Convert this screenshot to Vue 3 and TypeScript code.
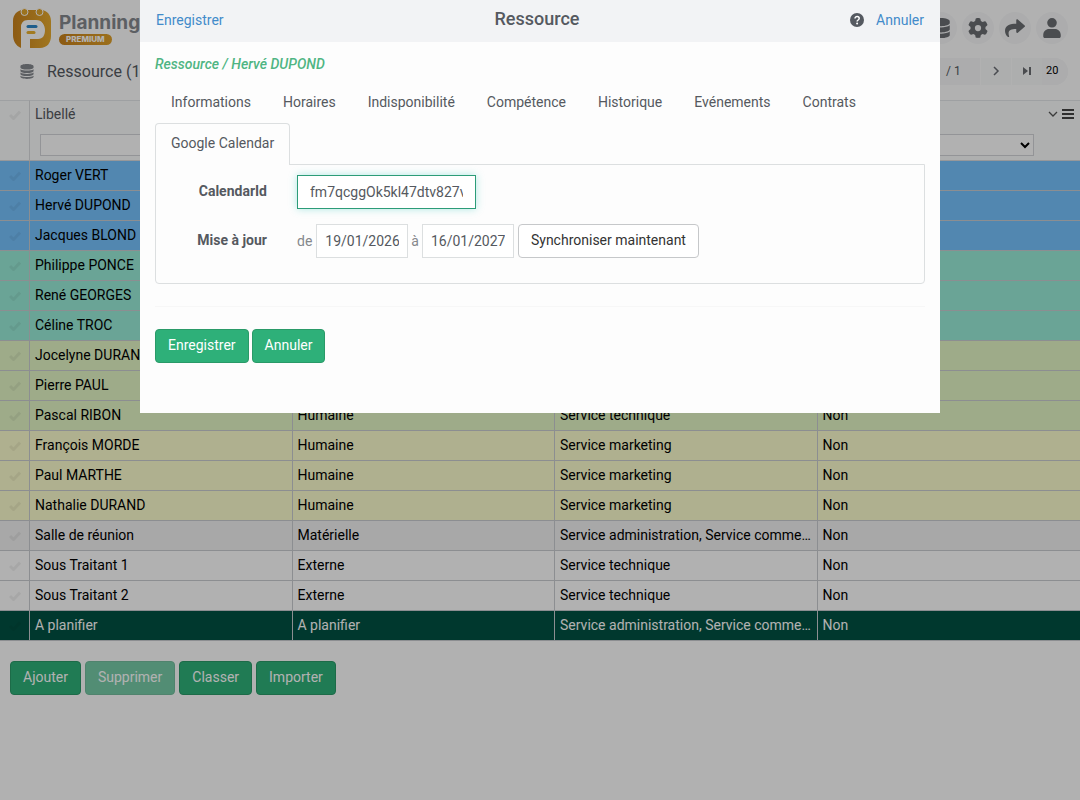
<script setup lang="ts">
import { ref } from 'vue'

interface Row {
  name: string
  tone: string
  type?: string
  service?: string
  ext?: string
}

const rows: Row[] = [
  { name: 'Roger VERT', tone: 'blue' },
  { name: 'Hervé DUPOND', tone: 'blue' },
  { name: 'Jacques BLOND', tone: 'blue' },
  { name: 'Philippe PONCE', tone: 'teal' },
  { name: 'René GEORGES', tone: 'teal' },
  { name: 'Céline TROC', tone: 'teal' },
  { name: 'Jocelyne DURAND', tone: 'green' },
  { name: 'Pierre PAUL', tone: 'green' },
  { name: 'Pascal RIBON', tone: 'green', type: 'Humaine', service: 'Service technique', ext: 'Non' },
  { name: 'François MORDE', tone: 'yellow', type: 'Humaine', service: 'Service marketing', ext: 'Non' },
  { name: 'Paul MARTHE', tone: 'yellow', type: 'Humaine', service: 'Service marketing', ext: 'Non' },
  { name: 'Nathalie DURAND', tone: 'yellow', type: 'Humaine', service: 'Service marketing', ext: 'Non' },
  { name: 'Salle de réunion', tone: 'grey', type: 'Matérielle', service: 'Service administration, Service commercial', ext: 'Non' },
  { name: 'Sous Traitant 1', tone: 'white', type: 'Externe', service: 'Service technique', ext: 'Non' },
  { name: 'Sous Traitant 2', tone: 'white', type: 'Externe', service: 'Service technique', ext: 'Non' },
  { name: 'A planifier', tone: 'dark', type: 'A planifier', service: 'Service administration, Service commercial', ext: 'Non' },
]

const tabs = ['Informations', 'Horaires', 'Indisponibilité', 'Compétence', 'Historique', 'Evénements', 'Contrats', 'Google Calendar']
const activeTab = ref('Google Calendar')
const calendarId = ref('fm7qcggOk5kl47dtv827v')
const dateFrom = ref('19/01/2026')
const dateTo = ref('16/01/2027')
const pageSize = ref('20')
const nameFilter = ref('')
</script>

<template>
  <div class="app">
    <div class="page">
      <header class="top">
        <a class="brand" href="#">
          <svg class="logo" viewBox="0 0 40 42" aria-hidden="true">
            <defs>
              <linearGradient id="gold" x1="0" y1="0" x2="1" y2="0">
                <stop offset="0" stop-color="#c9821c" />
                <stop offset="1" stop-color="#e6aa2e" />
              </linearGradient>
            </defs>
            <path d="M11 3h18c6 0 10 5 10 11v15c0 7-4 12-11 12H18V32h8c5 0 7-4 7-9s-3-9-8-9H15c-4 0-6 3-6 7v20C4 39 1 34 1 28V14C1 8 5 3 11 3z" fill="url(#gold)" />
            <path d="M9 42V21c0-5 2-8 7-8h8c6 0 8 4 8 9s-2 9-8 9h-6v11z" fill="#fff" />
            <circle cx="12.500" cy="5" r="3.500" fill="#e0a52c" stroke="#fff" stroke-width="1" />
            <circle cx="27.500" cy="5" r="3.500" fill="#e0a52c" stroke="#fff" stroke-width="1" />
            <path d="M16 19.500h8" stroke="#2b86c8" stroke-width="3" stroke-linecap="round" />
            <path d="M16 25.500h6" stroke="#e8b030" stroke-width="3" stroke-linecap="round" />
          </svg>
          <span class="words">
            <span class="word">Planning</span>
            <span class="badge">PREMIUM</span>
          </span>
        </a>
        <nav class="tools" aria-label="Outils">
          <button class="round" type="button" aria-label="Données">
            <svg viewBox="0 0 448 512" class="i20"><path d="M448 80v48c0 44-100 80-224 80S0 172 0 128V80C0 36 100 0 224 0s224 36 224 80zM0 186c48 38 130 54 224 54s176-16 224-54v102c0 44-100 80-224 80S0 332 0 288zm0 160c48 38 130 54 224 54s176-16 224-54v86c0 44-100 80-224 80S0 476 0 432z" /></svg>
          </button>
          <button class="round" type="button" aria-label="Paramètres">
            <svg viewBox="0 0 512 512" class="i20"><path d="M495.900 166.600c3.200 8.700.5 18.400-6.400 24.600l-43.300 39.400c1.100 8.300 1.700 16.800 1.700 25.400s-.6 17.100-1.700 25.400l43.300 39.400c6.900 6.200 9.600 15.900 6.400 24.600-4.400 11.900-9.700 23.300-15.800 34.300l-4.700 8.100c-6.600 11-14 21.400-22.100 31.200-5.900 7.200-15.700 9.600-24.500 6.800l-55.700-17.700c-13.400 10.300-28.200 18.900-44 25.400l-12.500 57.100c-2 9.100-9 16.300-18.200 17.800-13.800 2.300-28 3.500-42.500 3.500s-28.700-1.200-42.500-3.500c-9.200-1.500-16.200-8.700-18.200-17.800l-12.500-57.100c-15.800-6.500-30.600-15.100-44-25.400l-55.600 17.800c-8.800 2.800-18.600.3-24.500-6.800-8.100-9.800-15.500-20.200-22.100-31.200l-4.700-8.100c-6.100-11-11.400-22.400-15.800-34.300-3.200-8.700-.5-18.400 6.400-24.600l43.300-39.400C64.600 273.100 64 264.600 64 256s.6-17.100 1.700-25.400l-43.300-39.400c-6.900-6.200-9.600-15.900-6.400-24.600 4.400-11.900 9.700-23.300 15.800-34.300l4.700-8.100c6.600-11 14-21.400 22.100-31.200 5.900-7.200 15.700-9.600 24.500-6.800l55.700 17.700c13.400-10.300 28.200-18.900 44-25.400l12.500-57.100c2-9.100 9-16.300 18.200-17.800C227.300 1.200 241.500 0 256 0s28.700 1.200 42.500 3.500c9.200 1.500 16.200 8.700 18.200 17.800l12.500 57.100c15.800 6.500 30.600 15.100 44 25.400l55.700-17.700c8.800-2.800 18.600-.3 24.500 6.800 8.100 9.800 15.500 20.200 22.100 31.200l4.700 8.100c6.100 11 11.400 22.400 15.700 34.400zM256 336a80 80 0 1 0 0-160 80 80 0 1 0 0 160z" /></svg>
          </button>
          <button class="round" type="button" aria-label="Partager">
            <svg viewBox="0 0 512 512" class="i20"><path d="M503.700 226.200l-176 152C312.300 391.500 288 380.700 288 360v-80C127.400 282 60 321 106 467c5 16-14 29-28 19C34 454 0 393 0 332 0 180 127 148 288 146V56c0-20.700 24.300-31.500 39.700-18.200l176 152c11 9.600 11 26.800 0 36.400z" /></svg>
          </button>
          <button class="round" type="button" aria-label="Compte">
            <svg viewBox="0 0 448 512" class="i20"><path d="M224 246a123 123 0 1 0 0-246 123 123 0 1 0 0 246zM150 280h148c83 0 150 67 150 150v42c0 22-18 40-40 40H40c-22 0-40-18-40-40v-42c0-83 67-150 150-150z" /></svg>
          </button>
        </nav>
      </header>

      <div class="subbar">
        <svg viewBox="0 0 448 512" class="i14"><path d="M448 73v45c0 40-100 73-224 73S0 158 0 118V73C0 33 100 0 224 0s224 33 224 73zM0 176c48 33 136 49 224 49s176-16 224-49v60c0 40-100 73-224 73S0 276 0 236zm0 118c48 33 136 49 224 49s176-16 224-49v46c0 40-100 73-224 73S0 380 0 340zm0 104c48 33 136 49 224 49s176-16 224-49v41c0 40-100 73-224 73S0 479 0 439z" /></svg>
        <h1>Ressource (16)</h1>
        <div class="pager">
          <span class="count">/ 1</span>
          <button type="button" aria-label="Page suivante"><svg viewBox="0 0 10 10" class="i10"><path d="M3 1l4 4-4 4" fill="none" stroke="#6b6e75" stroke-width="1.500" /></svg></button>
          <button type="button" aria-label="Dernière page"><svg viewBox="0 0 10 10" class="i10"><path d="M1 1l5 4-5 4zM7 1h2v8H7z" /></svg></button>
          <input v-model="pageSize" aria-label="Lignes par page" />
        </div>
      </div>

      <table>
        <colgroup><col class="c-check" /><col /><col /><col /><col /></colgroup>
        <thead>
          <tr>
            <th class="tick"><svg viewBox="0 0 12 10"><path d="M1 5l3.500 3.500L11 1.500" /></svg></th>
            <th>
              <div class="label">Libellé</div>
              <input v-model="nameFilter" class="filter" aria-label="Filtrer par libellé" />
            </th>
            <th></th>
            <th></th>
            <th>
              <div class="label end">
                <svg viewBox="0 0 10 10" class="i10"><path d="M1 3l4 4 4-4" fill="none" stroke="#555" stroke-width="1.300" /></svg>
                <svg viewBox="0 0 12 10" class="menu"><path d="M0 0h12v2H0zM0 4h12v2H0zM0 8h12v2H0z" /></svg>
              </div>
              <select class="filter" aria-label="Filtrer"><option></option></select>
            </th>
          </tr>
        </thead>
        <tbody>
          <tr v-for="row in rows" :key="row.name" :class="row.tone">
            <td class="tick"><svg viewBox="0 0 12 10"><path d="M1 5l3.500 3.500L11 1.500" /></svg></td>
            <td>{{ row.name }}</td>
            <td>{{ row.type }}</td>
            <td>{{ row.service }}</td>
            <td>{{ row.ext }}</td>
          </tr>
        </tbody>
      </table>

      <div class="actions">
        <button class="btn" type="button">Ajouter</button>
        <button class="btn" type="button" disabled>Supprimer</button>
        <button class="btn" type="button">Classer</button>
        <button class="btn" type="button">Importer</button>
      </div>
    </div>

    <div class="overlay">
      <section class="modal" role="dialog" aria-labelledby="dialog-title">
        <header class="modal-head">
          <a href="#">Enregistrer</a>
          <h2 id="dialog-title">Ressource</h2>
          <div class="head-end">
            <svg viewBox="0 0 14 14" class="help" aria-hidden="true"><circle cx="7" cy="7" r="7" fill="#555960" /><path d="M5 5.500c0-2.700 4.200-2.600 4.200 0C9.200 7 7.100 7 7.100 8.500" fill="none" stroke="#fff" stroke-width="1.500" /><circle cx="7.100" cy="10.500" r="1" fill="#fff" /></svg>
            <a href="#">Annuler</a>
          </div>
        </header>
        <div class="modal-body">
          <p class="crumb">Ressource / Hervé DUPOND</p>
          <div class="tabs" role="tablist">
            <button v-for="tab in tabs" :key="tab" type="button" role="tab" :aria-selected="tab === activeTab" :class="{ active: tab === activeTab }" @click="activeTab = tab">{{ tab }}</button>
          </div>
          <div class="panel" role="tabpanel">
            <div class="line">
              <label for="calendar-id">CalendarId</label>
              <input id="calendar-id" v-model="calendarId" class="field focus" />
            </div>
            <div class="line">
              <label for="date-from">Mise à jour</label>
              <div class="range">
                <span>de</span>
                <div class="dates">
                  <input id="date-from" v-model="dateFrom" class="field date" />
                  <span>à</span>
                  <input v-model="dateTo" class="field date" aria-label="Date de fin" />
                </div>
                <button class="btn plain" type="button">Synchroniser maintenant</button>
              </div>
            </div>
          </div>
          <hr />
          <div class="modal-actions">
            <button class="btn" type="button">Enregistrer</button>
            <button class="btn" type="button">Annuler</button>
          </div>
        </div>
      </section>
    </div>
  </div>
</template>

<style>
body {
  margin: 0;
  background: #fefefe;
}
</style>

<style scoped>
.app,
.app * {
  box-sizing: border-box;
}
.app {
  font: 14px/20px Roboto, "Liberation Sans", sans-serif;
  color: #555960;
}
button,
input,
select {
  font: inherit;
  color: inherit;
  margin: 0;
}
svg {
  display: block;
  flex: none;
}
.page {
  min-height: 100vh;
  background: #fefefe;
}
.top {
  display: flex;
  justify-content: space-between;
  align-items: center;
  height: 56px;
  padding: 0 12px;
}
.brand {
  display: flex;
  gap: 7px;
  text-decoration: none;
}
.logo {
  width: 40px;
  height: 42px;
}
.words {
  display: flex;
  flex-direction: column;
  align-items: flex-start;
  padding-top: 5px;
}
.word {
  font-family: Inter, Roboto, sans-serif;
  font-size: 19px;
  line-height: 22px;
  font-weight: 700;
  color: #85888e;
}
.badge {
  height: 11px;
  padding: 0 7px;
  border-radius: 6px;
  background: linear-gradient(90deg, #c9821c, #dfa02a);
  color: #fff;
  font-family: Inter, Roboto, sans-serif;
  font-size: 8px;
  line-height: 11px;
  font-weight: 800;
}
.tools {
  display: flex;
  gap: 5px;
}
.round {
  display: grid;
  place-items: center;
  width: 32px;
  height: 32px;
  padding: 0;
  border: 0;
  border-radius: 16px;
  background: #f6f7f8;
}
.round svg,
.pager svg {
  fill: #6b6e72;
}
.i20 {
  width: 20px;
  height: 20px;
}
.i14 {
  width: 14px;
  height: 15px;
  fill: #85888e;
}
.i10 {
  width: 10px;
  height: 10px;
}
.subbar {
  display: flex;
  align-items: center;
  gap: 13px;
  height: 44px;
  padding: 0 12px 14px 20px;
}
h1 {
  margin: 0;
  padding-top: 2px;
  font-size: 16px;
  line-height: 20px;
  font-weight: 400;
}
.pager {
  display: flex;
  margin-left: auto;
  height: 27px;
  line-height: 27px;
  border-radius: 14px;
  overflow: hidden;
  background: #f6f7f8;
}
.pager .count {
  width: 60px;
  padding-left: 26px;
  font-size: 12px;
}
.pager button {
  display: grid;
  place-items: center;
  width: 31px;
  padding: 0;
  border: 0;
  border-left: 1px solid #fefefe;
  background: #f8f9fa;
}
.pager input {
  width: 26px;
  padding: 0 0 2px 4px;
  border: 0;
  background: #f6f7f8;
  color: #000;
  font-size: 11px;
}
table {
  width: 100%;
  table-layout: fixed;
  border-collapse: separate;
  border-spacing: 0;
  color: #000;
}
.c-check {
  width: 30px;
}
th {
  height: 61px;
  padding: 3px 5px 0;
  border-top: 1px solid #e3e5e8;
  border-bottom: 1px solid #d8dadd;
  background: #fafbfb;
  vertical-align: top;
  text-align: left;
  font-weight: 400;
  color: #555960;
}
th:first-child,
th:nth-child(2) {
  border-right: 1px solid #d8dadd;
}
.label {
  display: flex;
  height: 20px;
  align-items: center;
}
.end {
  justify-content: flex-end;
  gap: 4px;
  padding-right: 1px;
}
.menu {
  width: 12px;
  height: 10px;
  fill: #444;
}
.filter {
  display: block;
  width: calc(100% - 10px);
  height: 22px;
  margin: 10px 5px 0;
  border: 1px solid #d3d5d8;
  background: #fefefe;
}
select.filter {
  width: 206px;
  color: #000;
}
td {
  height: 30px;
  padding: 0 5px 2px;
  border-right: 1px solid #c9ccd0;
  border-bottom: 1px solid #c9ccd0;
  overflow: hidden;
  white-space: nowrap;
  text-overflow: ellipsis;
}
td:last-child {
  border-right: 0;
}
td.tick {
  padding-bottom: 0;
}
.tick svg {
  width: 12px;
  height: 10px;
  margin-left: 4px;
  fill: none;
  stroke: #000;
  stroke-opacity: 0.06;
  stroke-width: 3;
}
th.tick svg {
  margin-top: 6px;
}
.blue { background: #76c2fd; }
.teal { background: #99ebd7; }
.green { background: #e2f5c5; }
.yellow { background: #fbfccd; }
.grey { background: #f1f1f1; }
.white { background: #fefefe; }
.dark { background: #005142; color: #fefefe; }
.actions {
  display: flex;
  gap: 4px;
  padding: 20px 10px;
}
.btn {
  height: 34px;
  padding: 0 12px 2px;
  border: 1px solid #2a9a68;
  border-radius: 4px;
  background: #2eb079;
  color: #fff;
}
.btn:disabled {
  opacity: 0.65;
}
.overlay {
  position: fixed;
  inset: 0;
  background: rgba(0, 0, 0, 0.3);
}
.modal {
  max-width: 800px;
  margin: 0 auto;
  background: #fdfdfd;
}
.modal-head {
  display: grid;
  grid-template-columns: 1fr auto 1fr;
  align-items: center;
  height: 42px;
  padding: 0 16px 2px;
  background: #f2f3f5;
}
.modal-head a {
  color: #428bca;
  text-decoration: none;
}
h2 {
  margin: 0;
  padding: 0 6px 2px 0;
  font-size: 18px;
  line-height: 20px;
  font-weight: 500;
}
.head-end {
  display: flex;
  justify-content: flex-end;
  align-items: center;
  gap: 12px;
}
.help {
  width: 14px;
  height: 14px;
}
.modal-body {
  padding: 12px 15px 50px;
}
.crumb {
  margin: 0 0 8px;
  color: #4fb583;
  font-weight: 500;
  font-style: italic;
}
.tabs {
  display: flex;
  flex-wrap: wrap;
}
.tabs button {
  height: 41px;
  padding: 0 15px 2px;
  border: 1px solid transparent;
  border-bottom: 0;
  border-radius: 4px 4px 0 0;
  background: none;
}
.tabs .active {
  height: 42px;
  margin-bottom: -1px;
  padding-bottom: 4px;
  border-color: #dcdfe0;
  background: #fdfdfd;
}
.panel {
  display: flex;
  flex-direction: column;
  gap: 15px;
  padding: 10px 15px 25px;
  border: 1px solid #dcdfe0;
  border-radius: 0 0 4px 4px;
}
.line {
  display: flex;
  gap: 30px;
}
.line label {
  width: 96px;
  padding-top: 6px;
  text-align: right;
  font-weight: 700;
}
.range,
.dates {
  display: flex;
  align-items: center;
  color: #85888c;
}
.range {
  gap: 4px;
}
.dates {
  gap: 3px;
}
.field {
  width: 179px;
  height: 34px;
  padding: 0 12px;
  border: 1px solid #dcdfe0;
  background: #fff;
  color: #555960;
  outline: 0;
}
.focus {
  border-color: #2c9c78;
  box-shadow: 0 0 8px rgba(60, 200, 190, 0.4);
}
.date {
  width: 92px;
  padding: 0 8px;
}
.plain {
  border-color: #c6c8ca;
  background: #fff;
  color: #333;
}
hr {
  margin: 22px 0;
  border: 0;
  border-top: 1px solid #f7f7f7;
}
.modal-actions {
  display: flex;
  gap: 3px;
}
</style>
